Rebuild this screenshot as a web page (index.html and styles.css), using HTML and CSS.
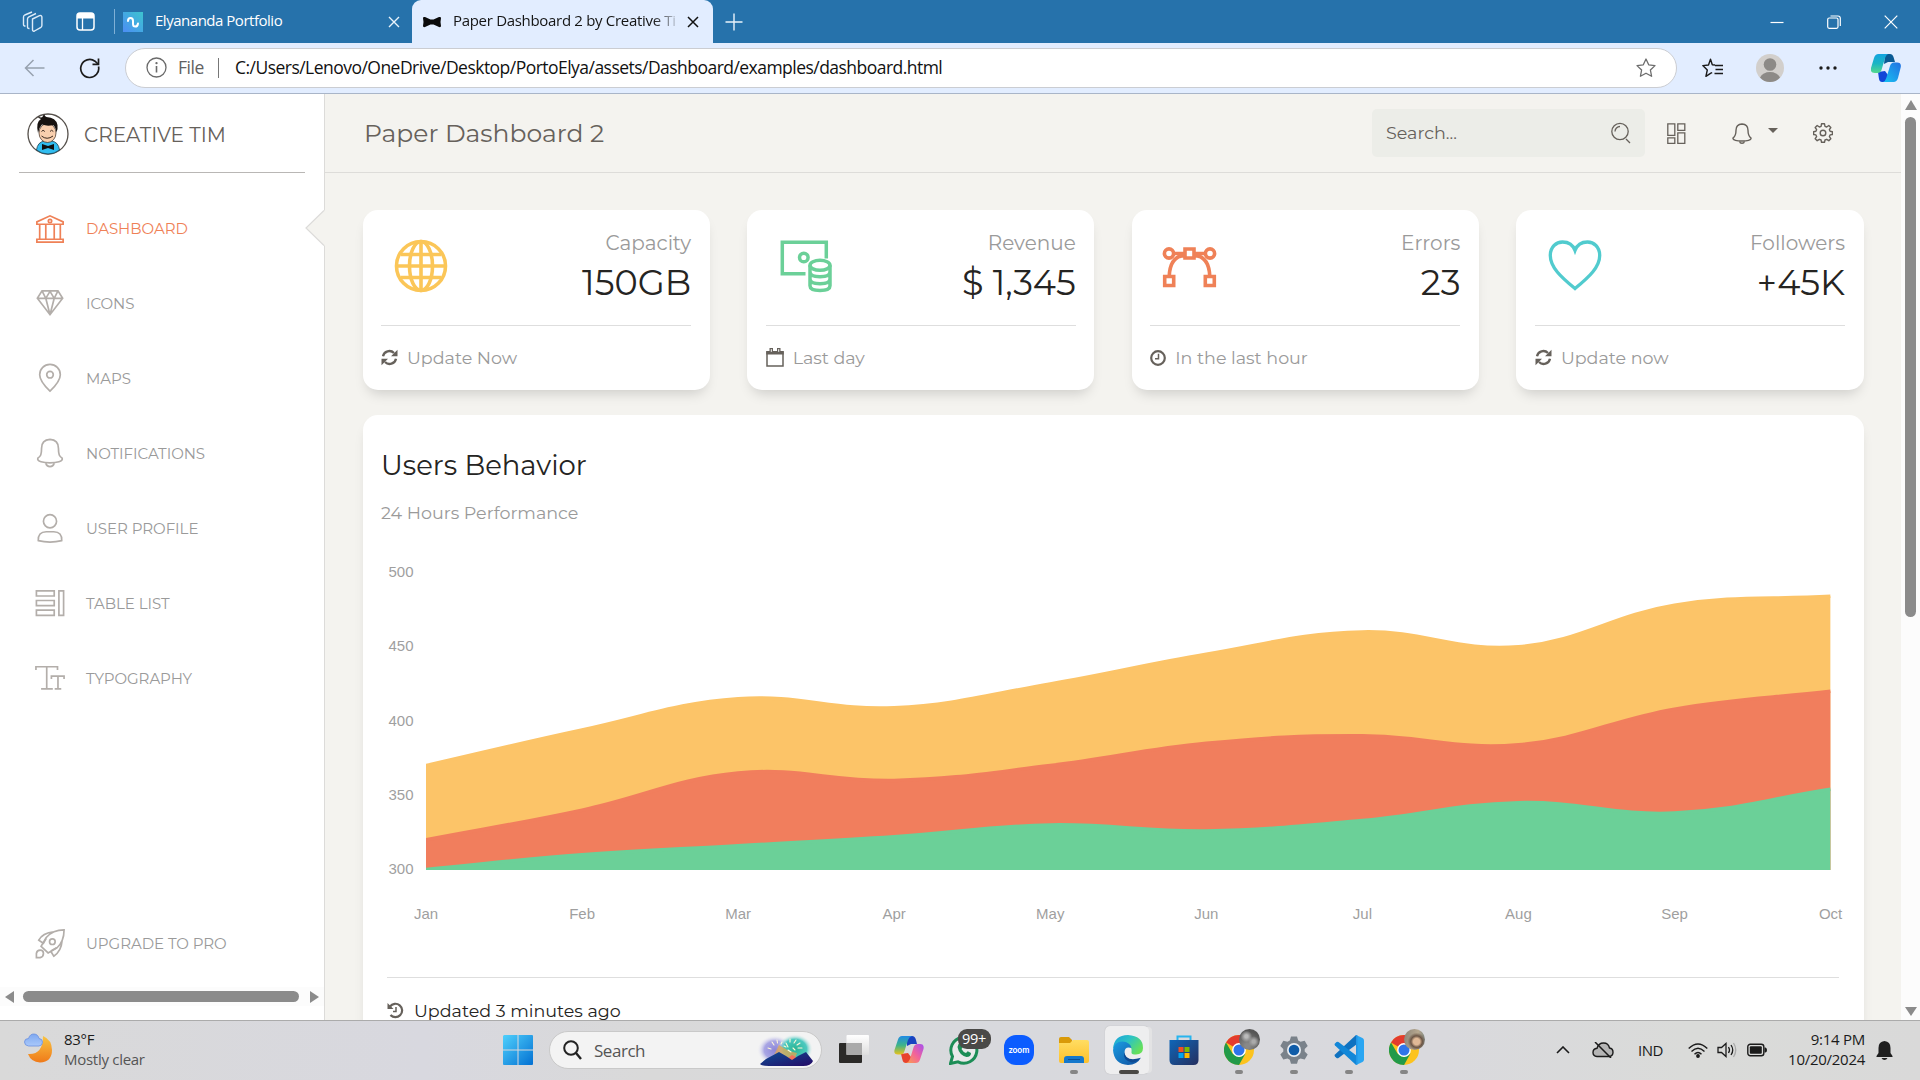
FILE: index.html
```html
<!DOCTYPE html>
<html lang="en">
<head>
<meta charset="utf-8">
<title>Paper Dashboard 2 by Creative Tim</title>
<link rel="stylesheet" href="styles.css">
</head>
<body>
<header class="tabbar">
  <div class="tab-tools">
    <svg class="workspaces" width="24" height="24" viewBox="0 0 24 24" fill="none" stroke="#dcebf8" stroke-width="1.4" stroke-linejoin="round"><path d="M10 9l7-3.3q2-.8 2.4 1.2v8.6q0 1.4-1.4 2.2l-6 3.3q-2 .8-2-1.4z" transform="translate(1.5 0)"/><path d="M8.5 18.5q-2 .3-2-1.7V9q0-1.4 1.4-2.2L15 3.5"/><path d="M4.5 16q-2 .2-2-1.8V7q0-1.3 1.3-2L11 2"/></svg>
    <svg class="vtabs" width="20" height="20" viewBox="0 0 20 20"><rect x="1" y="1" width="17" height="17" rx="3" fill="none" stroke="#fff" stroke-width="1.5"/><path d="M1 4q0-3 3-3h11q3 0 3 3v2.5H1z" fill="#fff"/><path d="M6.5 6v12" stroke="#fff" stroke-width="1.3"/></svg>
    <i class="tab-sep"></i>
  </div>
  <div class="tab">
    <svg class="favicon" width="20" height="20" viewBox="0 0 20 20"><defs><linearGradient id="fv" x1="0" y1="1" x2="1" y2="0"><stop offset="0" stop-color="#4c8df5"/><stop offset="1" stop-color="#3cc4cf"/></linearGradient></defs><rect width="20" height="20" fill="url(#fv)"/><path d="M5 9q0-3 2.5-3T10 9v3q0 2.5 2.3 2.5T15 11.5" fill="none" stroke="#fff" stroke-width="2" stroke-linecap="round"/></svg>
    <span class="tab-title">Elyananda Portfolio</span>
    <svg class="x" width="12" height="12" viewBox="0 0 12 12"><path d="M1 1l10 10M11 1L1 11" stroke="#e9f3fb" stroke-width="1.4"/></svg>
  </div>
  <div class="tab active">
    <svg width="20" height="12" viewBox="0 0 20 12"><path d="M1 2Q1 .5 3 1l5.5 2.5h3L17 1q2-.5 2 1l-.5 4 .5 4q0 1.5-2 1l-5.5-2.5h-3L3 11q-2 .5-2-1l.5-4z" fill="#0b0b0b"/></svg>
    <span class="tab-title">Paper Dashboard 2 by Creative Ti</span>
    <svg class="x" width="12" height="12" viewBox="0 0 12 12"><path d="M1 1l10 10M11 1L1 11" stroke="#111" stroke-width="1.5"/></svg>
  </div>
  <svg class="plus" width="18" height="18" viewBox="0 0 18 18"><path d="M9 .5v17M.5 9h17" stroke="#e9f3fb" stroke-width="1.4"/></svg>
  <div class="winctl">
    <svg width="14" height="14" viewBox="0 0 14 14"><path d="M.5 7.5h13" stroke="#fff" stroke-width="1.2"/></svg>
    <svg width="14" height="14" viewBox="0 0 14 14" fill="none" stroke="#fff" stroke-width="1.2"><rect x=".7" y="3" width="10.3" height="10.3" rx="1.5"/><path d="M3.5 1h7.5q2.3 0 2.3 2.3V11"/></svg>
    <svg width="14" height="14" viewBox="0 0 14 14"><path d="M.7.7l12.6 12.6M13.3.7L.7 13.3" stroke="#fff" stroke-width="1.2"/></svg>
  </div>
</header>

<div class="toolbar">
  <svg class="back" width="21" height="18" viewBox="0 0 21 18" fill="none" stroke="#97a1af" stroke-width="1.5"><path d="M20.5 9H1.5M9.5 1L1.5 9l8 8"/></svg>
  <svg class="reload" width="22" height="22" viewBox="0 0 22 22" fill="none" stroke="#1b1b1b" stroke-width="1.7"><path d="M19.5 9.5A9 9 0 1 1 16 4.2L19 7"/><path d="M19.5 1.5V7.3H13.5"/></svg>
  <div class="omnibox">
    <svg width="21" height="21" viewBox="0 0 21 21" fill="none" stroke="#6a6a6a" stroke-width="1.3"><circle cx="10.5" cy="10.5" r="9.5"/><path d="M10.5 9v6.5" stroke-width="1.6"/><circle cx="10.5" cy="6.2" r=".5" fill="#6a6a6a"/></svg>
    <span class="scheme">File</span>
    <i class="url-sep"></i>
    <span class="url">C:/Users/Lenovo/OneDrive/Desktop/PortoElya/assets/Dashboard/examples/dashboard.html</span>
    <svg class="star" width="20" height="20" viewBox="0 0 20 20" fill="none" stroke="#6d6d6d" stroke-width="1.3" stroke-linejoin="round"><path d="M10 1l2.700 5.800 6.300.8-4.600 4.400 1.200 6.300L10 15.200l-5.600 3.100L5.600 12 1 7.600l6.300-.8z"/></svg>
  </div>
  <svg class="favs" width="22" height="20" viewBox="0 0 22 20" fill="none" stroke="#1b1b1b" stroke-width="1.4" stroke-linejoin="round"><path d="M13 7l-2.700-.2L8.500 1.200 6.500 7l-5.700.6L5.300 12l-1.400 6.300 5-3.200 1.300-.4"/><path d="M13 7.500h8M13.500 11.500H21M12.500 15.500H21"/></svg>
  <svg class="avatar" width="28" height="28" viewBox="0 0 28 28"><circle cx="14" cy="14" r="14" fill="#d2cfcc"/><circle cx="14" cy="10.500" r="6.300" fill="#8d8a87"/><path d="M4 23.500Q7 18 14 18t10 5.500Q20 28 14 28T4 23.500z" fill="#8d8a87"/></svg>
  <svg class="dots" width="18" height="4" viewBox="0 0 18 4" fill="#1b1b1b"><circle cx="2" cy="2" r="1.700"/><circle cx="9" cy="2" r="1.700"/><circle cx="16" cy="2" r="1.700"/></svg>
  <svg class="copilot" width="30" height="28" viewBox="0 0 30 28"><defs><linearGradient id="c1" x1="0" y1="0" x2="0" y2="1"><stop offset="0" stop-color="#12a3e0"/><stop offset=".5" stop-color="#1bb5c4"/><stop offset="1" stop-color="#55d98c"/></linearGradient><linearGradient id="c2" x1="0" y1="1" x2="1" y2="0"><stop offset="0" stop-color="#17c3f2"/><stop offset="1" stop-color="#2370e2"/></linearGradient></defs><path d="M14 0h5q2.500 0 3.500 3l1.500 5h-7l-4 2z" fill="#0a5a94"/><path d="M7 18l7-1 3 4-1 7h-5q-2.500 0-3-3z" fill="#1246d8"/><path d="M7.500 0H17q-2 1-3 4l-3.500 12q-1 3-4 3H4q-5 0-4-5L3 4q1.200-4 4.500-4z" fill="url(#c1)"/><path d="M22.500 28H12q2.500-1 3.300-4L19 12q1-3.500 4-3.500h3q4.500 0 3.800 4.500L27 24q-1.200 4-4.500 4z" fill="url(#c2)"/></svg>
</div>

<div class="page">
  <aside class="sidebar">
    <div class="brand">
      <svg width="42" height="42" viewBox="0 0 42 42"><circle cx="21" cy="21" r="20" fill="#fff" stroke="#55504b" stroke-width="1.3"/><path d="M9.500 37q1-8 8-9h7q7 1 8 9-5 4-11.500 4T9.500 37z" fill="#31bdf0" stroke="#1a3d4d" stroke-width=".8"/><ellipse cx="20.500" cy="20" rx="8.500" ry="9.500" fill="#f9cfae" stroke="#3a2a20" stroke-width=".7"/><path d="M11 20Q8.500 9 14 6q-3-1-3-2.500 3 1.500 4.500.5 0-2 2-2.500 0 1.500 2 2.500 9.500.5 11 8 .5 4-1 7.500-1-6-3.500-7.500-5.500 1.500-11-.5-3 3-4 8.500z" fill="#17120f"/><path d="M14.500 18.500q1.500-2.500 3.300 0M23 18.500q1.500-2.500 3.300 0M14.500 23q5.500 4.500 11.500 0" fill="none" stroke="#3a2a20" stroke-width="1"/><path d="M15 31l6 2 6-2v6l-6-2-6 2z" fill="#101010"/></svg>
      <span>CREATIVE TIM</span>
    </div>
    <nav class="menu">
      <a class="item current"><svg viewBox="0 0 32 32"><path d="M2 12V9.500L16 3l14 6.500V12zM2 28h28v3H2zM5 12v16M11.500 12v16M20.500 12v16M27 12v16"/><circle cx="16" cy="8.500" r="1.800"/></svg><span>DASHBOARD</span></a>
      <a class="item"><svg viewBox="0 0 32 32"><path d="M7.500 3h17l5 8L16 28.500 2.500 11zM2.500 11h27M7.500 3l4 8L16 3.500l4.500 7.500 4-8M11.500 11L16 28.500 20.500 11"/></svg><span>ICONS</span></a>
      <a class="item"><svg viewBox="0 0 32 32"><path d="M16 30Q5 19.500 5 12.500a11 11 0 0 1 22 0Q27 19.500 16 30z"/><circle cx="16" cy="12.500" r="3.500"/></svg><span>MAPS</span></a>
      <a class="item"><svg viewBox="0 0 32 32"><path d="M16 1.500q-9 .5-9 9.500c0 7-1 8.500-4 10.500-1 3.500 6 5 13 5s14-1.500 13-5c-3-2-4-3.500-4-10.500q0-9-9-9.500zM11.500 27q1 3.500 4.500 3.500t4.500-3.500"/></svg><span>NOTIFICATIONS</span></a>
      <a class="item"><svg viewBox="0 0 32 32"><circle cx="16" cy="8.800" r="7"/><path d="M3.500 29.500Q3 20 12 20h8q9 0 8.500 9.500-6 1.500-12.500 1.500t-12.500-1.500z"/></svg><span>USER PROFILE</span></a>
      <a class="item"><svg viewBox="0 0 32 32"><path d="M1.500 3h19v5.500h-19zM1.500 13.300h19v5.500h-19zM1.500 23.600h19v5.500h-19zM25.500 3h5v26.100h-5z"/></svg><span>TABLE LIST</span></a>
      <a class="item"><svg viewBox="0 0 32 32"><path d="M1 7.500V4h23v3.500M12.500 4v23.500M6.500 27.500h12.500M17.500 17v-3H31v3M24.500 14v13.500M21 27.500h7"/></svg><span>TYPOGRAPHY</span></a>
    </nav>
    <a class="item upgrade"><svg viewBox="0 0 32 32"><path d="M31 1Q19 1 12 9L6.500 18.500l7.500 7L23.500 20Q31 13 31 1zM20 3Q8 4 4 12l4.500 3M29 12q-1 12-9 17l-3-5"/><path d="M12 10l-3.500 6M23 20l-6 3.500"/><circle cx="18.500" cy="13.500" r="3"/><path d="M1.500 30.500V26q.5-3.500 4-3.500t3.500 3.500-3.500 4.500z"/></svg><span>UPGRADE TO PRO</span></a>
    <div class="hscroll"><i class="arr left"></i><i class="hthumb"></i><i class="arr right"></i></div>
    <svg class="notch" width="20" height="38" viewBox="0 0 20 38"><path d="M20 1L1.500 19 20 37z" fill="#f4f3ef"/><path d="M19 1.500L1 19l18 17.500" fill="none" stroke="#dcdbd9" stroke-width="1.200"/></svg>
  </aside>

  <main class="main">
    <div class="navbar">
      <h1>Paper Dashboard 2</h1>
      <div class="search"><span>Search...</span>
        <svg width="20" height="22" viewBox="0 0 20 22" fill="none" stroke="#66615b" stroke-width="1.300"><circle cx="9" cy="9.500" r="8.200"/><path d="M15 17l4 4M4 9.500A5 5 0 0 1 9 4.500" /></svg>
      </div>
      <svg class="n-grid" width="19" height="21" viewBox="0 0 19 21" fill="none" stroke="#66615b" stroke-width="1.300"><path d="M.8.800h7v11.500h-7zM10.800.8h7v6.500h-7zM.8 14.800h7v5.500h-7zM10.800 9.800h7v10.500h-7z"/></svg>
      <svg class="n-bell" width="20" height="21" viewBox="0 0 20 21" fill="none" stroke="#66615b" stroke-width="1.400"><path d="M10 1q-6 .3-6 6.300C4 12 3.300 13.500 1 15c-.5 2.300 4 3 9 3s9.500-.7 9-3c-2.300-1.500-3-3-3-7.700Q16 1.300 10 1zM7.500 18.300q.5 2 2.500 2t2.500-2"/></svg>
      <i class="caret"></i>
      <svg class="n-gear" width="20" height="20" viewBox="0 0 20 20" fill="none" stroke="#66615b" stroke-width="1.400" stroke-linejoin="round"><path d="M8.500.8h3l.5 2.500 1.700.7 2.100-1.500 2 2-1.400 2.200.7 1.600 2.300.4v2.800l-2.300.4-.7 1.700 1.400 2.100-2 2-2.100-1.400-1.700.7-.5 2.300h-3l-.4-2.300-1.700-.7-2.200 1.400-2-2 1.400-2.100-.7-1.700-2.300-.4V8.700l2.300-.4.7-1.600L2.200 4.500l2-2L6.400 4l1.700-.7z"/><circle cx="10" cy="10" r="2.800"/></svg>
    </div>

    <div class="content">
      <div class="stats">
        <section class="card">
          <div class="stat"><svg width="56" height="56" viewBox="0 0 56 56" fill="none" stroke="#fbc658" stroke-width="3.600"><circle cx="28" cy="28" r="24.500"/><ellipse cx="28" cy="28" rx="11.500" ry="24.500"/><path d="M28 3.500v49M3.500 28h49M8 16.500h40M8 39.500h40"/></svg>
          <div class="nums"><p>Capacity</p><b>150GB</b></div></div>
          <div class="foot"><svg width="17" height="17" viewBox="0 0 17 17"><path d="M2 7.300A6.500 6.500 0 0 1 13 4M15 9.700A6.500 6.500 0 0 1 4 13" fill="none" stroke="#66615b" stroke-width="2.300"/><path d="M16.500.8v6.500H10zM.5 16.200V9.700H7z" fill="#66615b"/></svg><span>Update Now</span></div>
        </section>
        <section class="card">
          <div class="stat"><svg width="56" height="56" viewBox="0 0 56 56" fill="none" stroke="#6bd098" stroke-width="3.500"><path d="M48.300 20.500V4.300H4.300v31.500H27.500"/><circle cx="25.800" cy="19.500" r="4.300"/><ellipse cx="42" cy="27.300" rx="10" ry="5"/><path d="M32 27.300v20.500q0 4.700 10 4.700t10-4.700V27.300M32 34q0 4.700 10 4.700T52 34M32 41q0 4.700 10 4.700T52 41"/></svg>
          <div class="nums"><p>Revenue</p><b>$ 1,345</b></div></div>
          <div class="foot"><svg width="18" height="19" viewBox="0 0 18 19"><path d="M1 4h16v14H1z" fill="none" stroke="#66615b" stroke-width="1.500"/><path d="M.3 3h17.400v3.500H.3zM3.500 0h3.500v5H3.500zM11 0h3.500v5H11z" fill="#66615b"/><path d="M5.300 1.200v2.600M12.700 1.200v2.600" stroke="#fff" stroke-width="1"/></svg><span>Last day</span></div>
        </section>
        <section class="card">
          <div class="stat"><svg width="56" height="56" viewBox="0 0 56 56" fill="none" stroke="#ef8157" stroke-width="3.600"><circle cx="7" cy="15.500" r="4.600"/><circle cx="48" cy="15.500" r="4.600"/><path d="M23 11h9v9h-9zM2.700 38.500h9v9h-9zM43.300 38.500h9v9h-9zM11.500 15.500H23M32 15.500h11.500M7.200 38.500Q8 18 23 17.500M47.800 38.500Q47 18 32 17.500"/></svg>
          <div class="nums"><p>Errors</p><b>23</b></div></div>
          <div class="foot"><svg width="16" height="16" viewBox="0 0 16 16" fill="none" stroke="#66615b"><circle cx="8" cy="8" r="6.800" stroke-width="2.200"/><path d="M8.500 3.800v5H5" stroke-width="1.500"/></svg><span>In the last hour</span></div>
        </section>
        <section class="card">
          <div class="stat"><svg width="56" height="56" viewBox="0 0 56 56" fill="none" stroke="#51cbce" stroke-width="3.300"><path d="M28 50.500C14 39 3 29 3.300 17 3.500 9 9 4 15.500 4 21 4 26 7 28 12.500 30 7 35 4 40.500 4 47 4 52.500 9 52.700 17 53 29 42 39 28 50.500z"/></svg>
          <div class="nums"><p>Followers</p><b>+45K</b></div></div>
          <div class="foot"><svg width="17" height="17" viewBox="0 0 17 17"><path d="M2 7.300A6.500 6.500 0 0 1 13 4M15 9.700A6.500 6.500 0 0 1 4 13" fill="none" stroke="#66615b" stroke-width="2.300"/><path d="M16.500.8v6.500H10zM.5 16.200V9.700H7z" fill="#66615b"/></svg><span>Update now</span></div>
        </section>
      </div>

      <section class="card behavior">
        <h2>Users Behavior</h2>
        <p class="sub">24 Hours Performance</p>
        <svg id="chart" class="chart" width="1464" height="400" viewBox="0 0 1464 400"></svg>
        <div class="updated"><svg width="17" height="17" viewBox="0 0 17 17"><path d="M3 4.500A6.700 6.700 0 1 1 3.500 13" fill="none" stroke="#66615b" stroke-width="2.200"/><path d="M.5 1v6h6z" fill="#66615b"/><path d="M9 5v4.500H6" fill="none" stroke="#66615b" stroke-width="1.500"/></svg><span>Updated 3 minutes ago</span></div>
      </section>
    </div>
  </main>
  <div class="vscroll"><i class="arr up"></i><i class="vthumb"></i><i class="arr down"></i></div>
</div>

<footer class="taskbar">
  <div class="weather">
    <svg width="30" height="32" viewBox="0 0 30 32"><defs><linearGradient id="mn" x1="0" y1="0" x2="0" y2="1"><stop offset="0" stop-color="#f9c440"/><stop offset="1" stop-color="#ef7a1a"/></linearGradient><linearGradient id="cl" x1="0" y1="0" x2="0" y2="1"><stop offset="0" stop-color="#7ea8f0"/><stop offset="1" stop-color="#a9c8fa"/></linearGradient></defs><path d="M19 3q9 4 9 14 0 12-12 12.500Q7 29 4 21q15 1 15-18z" fill="url(#mn)"/><path d="M4.500 13q-4-.5-4-4t4-3.500Q6 .8 10 1t5 4.500q3.500.3 3.500 3.700T15 13z" fill="url(#cl)" stroke="#6a8fe0" stroke-width=".8"/></svg>
    <div class="wtext"><span>83°F</span><span class="dim">Mostly clear</span></div>
  </div>
  <div class="apps">
    <svg class="app" viewBox="0 0 30 30"><defs><linearGradient id="wn" x1="0" y1="0" x2="1" y2="1"><stop offset="0" stop-color="#4fd0fc"/><stop offset="1" stop-color="#0370d2"/></linearGradient></defs><path d="M1 0h13.500v14.500H0V1zM15.500 0H29q1 0 1 1v13.500H15.500zM0 15.500h14.500V30H1q-1 0-1-1zM15.500 15.500H30V29q0 1-1 1H15.500z" fill="url(#wn)"/></svg>
    <div class="tsearch">
      <svg width="19" height="20" viewBox="0 0 19 20" fill="none" stroke="#222" stroke-width="2"><circle cx="8" cy="8" r="6.800"/><path d="M13 13l5 6" stroke-width="2.400"/></svg>
      <span>Search</span>
      <svg class="fire" width="56" height="34" viewBox="0 0 56 34"><defs><radialGradient id="g1"><stop offset="0" stop-color="#8d86d8"/><stop offset=".6" stop-color="#a9a6e4"/><stop offset="1" stop-color="#f3f3f3" stop-opacity="0"/></radialGradient><radialGradient id="g2"><stop offset="0" stop-color="#2bb594"/><stop offset=".65" stop-color="#4cc9c0"/><stop offset="1" stop-color="#f3f3f3" stop-opacity="0"/></radialGradient><linearGradient id="g3" x1="0" y1="0" x2="1" y2="1"><stop offset="0" stop-color="#0d4f96"/><stop offset="1" stop-color="#260a66"/></linearGradient></defs><ellipse cx="18" cy="17" rx="18" ry="15" fill="url(#g1)"/><ellipse cx="38" cy="16" rx="18" ry="15" fill="url(#g2)"/><path d="M14 28L22 12l10 6 8 2-4 10z" fill="#e2a552" opacity=".75"/><path d="M31 25l4-3 4 2-3 6z" fill="#f4705a"/><path d="M3 31l6-5 13-7 7 4 6 4 6-4 8-4 7 9q-2 5-10 5H12q-8 0-9-2z" fill="url(#g3)"/><path d="M11 15l3 1M15 9l2 3M20 7l.5 3M25 9l-1 2M29 10l2 4M33 6v3M39 7l-2 3M43 10l-3 2M45 15h-4M36 15l2 2M31 17l3 2M27 13l2 1" stroke="#fff8d8" stroke-width="1.100" stroke-linecap="round"/></svg>
    </div>
    <svg class="app" viewBox="0 0 30 30"><defs><linearGradient id="tv" x1="0" y1="0" x2="0" y2="1"><stop offset="0" stop-color="#fff"/><stop offset="1" stop-color="#dedede"/></linearGradient></defs><rect x="0" y="8" width="23" height="20" rx="1" fill="#2b2a28"/><rect x="7.500" y="0" width="22.500" height="20" rx="1" fill="url(#tv)"/><path d="M7.500 8H23v12H7.500z" fill="#aaa"/></svg>
    <svg class="app" viewBox="0 0 30 30"><defs><linearGradient id="p1" x1="0" y1="0" x2="0" y2="1"><stop offset="0" stop-color="#1f8ae6"/><stop offset=".5" stop-color="#3db489"/><stop offset="1" stop-color="#e8c21a"/></linearGradient><linearGradient id="p2" x1="0" y1="1" x2="1" y2="0"><stop offset="0" stop-color="#fba24a"/><stop offset=".5" stop-color="#f2639a"/><stop offset="1" stop-color="#a650ef"/></linearGradient></defs><path d="M13 1h5q3 0 4 4l1 4h-6l-4 2z" fill="#1842c0"/><path d="M7 19l7-1 3 4-1 6h-4q-3 0-3.500-3z" fill="#e8432c"/><path d="M8 1h10q-3 1-4 4l-3.500 11q-1 3.500-4 3.500H4Q-.5 19.500.5 15L4 4.500Q5 1 8 1z" fill="url(#p1)"/><path d="M21.500 28H12q3-1 4-4l3.500-11.500q1-3.500 4-3.500H26q4.500 0 3.500 5L26 24.500q-1 3.500-4.500 3.500z" fill="url(#p2)"/></svg>
    <div class="badged"><svg class="app" viewBox="0 0 30 30"><path d="M1.500 28.500l2-7A13 13 0 1 1 9 26.800z" fill="#e9e9ea" stroke="#1c8d56" stroke-width="3"/><path d="M9.500 9q2-2 3.500.5l1 2.500-1.500 2q1.500 3 4.500 4l1.700-1.700 3.300 1.700q0 4-4.500 4Q10 20 8.500 12z" fill="#1c8d56"/></svg><em>99+</em></div>
    <svg class="app" viewBox="0 0 30 30"><rect width="30" height="30" rx="12" fill="#0b5cff"/><text x="15" y="17.500" text-anchor="middle" class="zoomtxt">zoom</text></svg>
    <div class="run"><svg class="app" viewBox="0 0 30 30"><defs><linearGradient id="fl" x1="0" y1="0" x2="0" y2="1"><stop offset="0" stop-color="#ffdd62"/><stop offset="1" stop-color="#fdc02b"/></linearGradient></defs><path d="M0 4q0-2 2-2h8l3 3v5H0z" fill="#d99a09"/><path d="M0 8h11l3-3h14q2 0 2 2v19q0 2-2 2H2q-2 0-2-2z" fill="url(#fl)"/><path d="M5 28v-4q0-3 3-3h14q3 0 3 3v4z" fill="#1578cc"/><path d="M9 24.500h12" stroke="#0b4f96"/></svg></div>
    <div class="tile run focus"><svg class="app" viewBox="0 0 30 30"><defs><linearGradient id="e1" x1="0" y1="0" x2="1" y2=".6"><stop offset="0" stop-color="#1ba0dc"/><stop offset=".5" stop-color="#2cc3c4"/><stop offset="1" stop-color="#66e05a"/></linearGradient><linearGradient id="e2" x1="0" y1="0" x2="1" y2="1"><stop offset="0" stop-color="#1b9de2"/><stop offset="1" stop-color="#0f4f9f"/></linearGradient></defs><path d="M0 14Q1 0 15 0q15 1 15 13 0 6-7 6.500-4 0-4.500-1.500 1-6-4-9-7-3-14.500 5z" fill="url(#e1)"/><path d="M0 15Q1 6.500 9.500 6.500 17 7 18.500 13q-7-2-7 5 1 7 9 7 4 0 7.500-2.500Q24 30 15 30 1 29 0 15z" fill="url(#e2)"/><path d="M11.500 17Q12 27 27.500 23q-3.500 4-8.500 4.500Q9 25 11.500 17z" fill="#0d4a92"/></svg></div>
    <svg class="app" viewBox="0 0 30 30"><defs><linearGradient id="st" x1="0" y1="0" x2="1" y2="1"><stop offset="0" stop-color="#0f66b8"/><stop offset="1" stop-color="#252f5f"/></linearGradient></defs><path d="M8.500 6V1.500h13V6" fill="none" stroke="#27b4ee" stroke-width="2"/><path d="M.5 5h29v20q0 5-5 5h-19q-5 0-5-5z" fill="url(#st)"/><path d="M9.500 12h5v5h-5z" fill="#f25022"/><path d="M15.500 12h5v5h-5z" fill="#7fba00"/><path d="M9.500 18h5v5h-5z" fill="#00a4ef"/><path d="M15.500 18h5v5h-5z" fill="#ffb900"/></svg>
    <div class="badged run"><svg class="app" viewBox="0 0 30 30"><circle cx="15" cy="15" r="15" fill="#fcc31e"/><path d="M15 15L2 7.500Q6 0 15 0t13 7.500z" fill="#e33b2e"/><path d="M2 7.500A15 15 0 0 0 15 30l6.500-11.500L15 22 8.500 18.500z" fill="#229a49"/><circle cx="15" cy="15" r="6.900" fill="#fff"/><circle cx="15" cy="15" r="5.500" fill="#2f74ea"/></svg><i class="pic grey"></i></div>
    <div class="run"><svg class="app" viewBox="0 0 30 30"><path d="M12 1.500h6l1.200 4 2.300 1.300 4.200-1 3 5.200-3 3v2.500l3 3-3 5-4.200-1-2.300 1.300-1.200 4h-6l-1.200-4-2.300-1.300-4.200 1-3-5 3-3V14l-3-3 3-5.200 4.200 1 2.300-1.300z" fill="#7a828a"/><circle cx="15" cy="15" r="7" fill="#e8eef4"/><circle cx="15" cy="15" r="5.300" fill="#0f5ca8"/></svg></div>
    <div class="run"><svg class="app" viewBox="0 0 30 30"><path d="M22 0v30l6.500-3q1.500-.8 1.500-2.500v-19Q30 3.800 28.500 3z" fill="#2aa6f2"/><path d="M22 0L1 19.500q-1 1 0 2L2.500 23q1 .7 2 0L23 9z" fill="#0f72c0"/><path d="M22 30L1 10.500q-1-1 0-2L2.500 7q1-.7 2 0L23 21z" fill="#1287d8"/><path d="M22 0v30l1.500-.5V.5z" fill="#2196e6"/></svg></div>
    <div class="badged run"><svg class="app" viewBox="0 0 30 30"><circle cx="15" cy="15" r="15" fill="#fcc31e"/><path d="M15 15L2 7.500Q6 0 15 0t13 7.500z" fill="#e33b2e"/><path d="M2 7.500A15 15 0 0 0 15 30l6.500-11.500L15 22 8.500 18.500z" fill="#229a49"/><circle cx="15" cy="15" r="6.900" fill="#fff"/><circle cx="15" cy="15" r="5.500" fill="#2f74ea"/></svg><i class="pic tan"></i></div>
  </div>
  <div class="tray">
    <svg class="t-up" width="14" height="8" viewBox="0 0 14 8" fill="none" stroke="#1b1b1b" stroke-width="1.600"><path d="M1 7l6-6 6 6"/></svg>
    <svg class="t-cloud" width="22" height="16" viewBox="0 0 22 16"><path d="M5 14.500q-4-.3-4-4T5 6.300Q6.500 1 11.500 1t6 5Q21 6.500 21 10.300t-4 4.200z" fill="#b5b5b5" stroke="#1b1b1b" stroke-width="1.400"/><path d="M3 0l16 16" stroke="#1b1b1b" stroke-width="1.500"/></svg>
    <span class="ind">IND</span>
    <svg class="t-wifi" width="20" height="15" viewBox="0 0 20 15" fill="none" stroke="#1b1b1b" stroke-width="1.400"><path d="M.7 5.500Q10-3.500 19.300 5.500M3.500 8.500Q10 2 16.500 8.500M6.500 11.300q3.500-3.500 7 0"/><circle cx="10" cy="13" r="1.200" fill="#1b1b1b"/></svg>
    <svg class="t-vol" width="20" height="16" viewBox="0 0 20 16" fill="none" stroke="#1b1b1b" stroke-width="1.300"><path d="M1 5.500h3.500L9 1.500v13L4.500 10.500H1z"/><path d="M11.500 5q2 3 0 6M14 3q3.500 5 0 10"/><path d="M16.500 1q4.500 7 0 14" stroke="#aaa"/></svg>
    <svg class="t-bat" width="20" height="14" viewBox="0 0 20 14"><rect x=".8" y="1.300" width="16" height="11.400" rx="2.500" fill="none" stroke="#1b1b1b" stroke-width="1.400"/><rect x="2.800" y="3.300" width="12" height="7.400" rx="1" fill="#1b1b1b"/><path d="M17.500 4.500h1q1.500.5 1.500 2.500t-1.500 2.500h-1z" fill="#1b1b1b"/></svg>
    <div class="clock"><span>9:14 PM</span><span>10/20/2024</span></div>
    <svg class="t-bell" width="17" height="19" viewBox="0 0 17 19" fill="#1f1f1f"><path d="M8.500 0Q14.500.5 14.500 7v5l2 3v1H.5v-1l2-3V7Q2.500.5 8.500 0zM5.500 17h6q-1 2-3 2t-3-2z"/></svg>
  </div>
</footer>
<script src="chart.js"></script>
</body>
</html>
```
FILE: styles.css
```css
* { box-sizing: border-box; margin: 0; padding: 0; }
body { width: 1920px; height: 1080px; overflow: hidden; display: flex; flex-direction: column; font-family: "Segoe UI", "Open Sans", sans-serif; background: #fff; }
svg { flex: none; display: block; }
span, p, b, h1, h2, em { white-space: nowrap; font-weight: 400; font-style: normal; }

/* Browser tab strip */
.tabbar { height: 43px; flex: none; background: #2672ab; display: flex; align-items: center; }
.tab-tools { width: 123px; display: flex; align-items: center; padding-left: 21px; }
.vtabs { margin-left: 31px; }
.tab-sep { width: 1px; height: 25px; background: #7fb0d6; margin-left: 18px; }
.tab { width: 289px; height: 43px; display: flex; align-items: center; }
.tab .x { margin-left: auto; margin-right: 12px; }
.tab.active { width: 301px; background: #e2edff; border-radius: 9px 9px 0 0; padding-left: 10px; }
.tab.active .x { margin-right: 14px; }
.tab-title { color: #fff; font-size: 15px; margin-left: 12px; padding-bottom: 3px; letter-spacing: -.48px; }
.tab.active .tab-title { color: #151515; width: 226px; margin-left: 11px; letter-spacing: -.31px; -webkit-mask-image: linear-gradient(90deg, #000 200px, rgba(0,0,0,.15) 224px); mask-image: linear-gradient(90deg, #000 200px, rgba(0,0,0,.15) 224px); }
.plus { margin-left: 12px; }
.winctl { margin-left: auto; display: flex; gap: 43px; padding-right: 22px; }

/* Address bar */
.toolbar { height: 51px; flex: none; background: #e2edff; border-bottom: 1px solid #a9b5c8; display: flex; align-items: center; padding-left: 24px; }
.reload { margin-left: 34px; }
.omnibox { width: 1552px; height: 40px; margin-left: 24px; margin-top: -1px; border: 1px solid #cbcdd2; border-radius: 20px; background: #fff; display: flex; align-items: center; padding: 0 20px; }
.scheme { font-size: 17.5px; color: #616161; margin-left: 11px; width: 27px; letter-spacing: -.43px; padding-bottom: 1px; }
.url-sep { width: 1px; height: 20px; background: #777; margin: 0 16px 0 13px; }
.url { font-size: 17.5px; color: #111; letter-spacing: -.53px; padding-bottom: 1px; }
.star { margin-left: auto; }
.favs { margin-left: 25px; }
.avatar { margin-left: 32px; }
.dots { margin-left: 35px; }
.copilot { margin-left: 34px; }

/* Dashboard sidebar */
.page { height: 926px; flex: none; display: flex; overflow: hidden; font-family: Montserrat, Inter, sans-serif; }
.sidebar { position: relative; width: 325px; flex: none; background: #fff; border-right: 1px solid #dcdbd9; display: flex; flex-direction: column; }
.brand { height: 79px; margin: 0 19px; border-bottom: 1px solid #b9b7b5; display: flex; align-items: center; padding: 2px 0 0 8px; }
.brand span { margin-left: 15px; padding-top: 2px; font-size: 20px; color: #66615b; }
.menu { padding-top: 18px; }
.item { display: flex; align-items: center; height: 75px; padding-left: 35px; color: #9a9a9a; font-size: 15px; }
.menu .item { padding-bottom: 1px; }
.item svg { width: 30px; height: 30px; fill: none; stroke: #b3aeaa; stroke-width: 1.8; }
.item span { margin-left: 21px; letter-spacing: -.04px; }
.item.current { color: #ef8157; }
.item.current svg { stroke: #ef8157; }
.upgrade { margin-top: auto; margin-bottom: 6px; }
.hscroll { height: 19px; margin-bottom: 14px; background: #fcfcfc; display: flex; align-items: center; padding: 0 5px; }
.arr { width: 0; height: 0; border: 6px solid transparent; flex: none; }
.arr.left { border-right: 9px solid #8b8b8b; border-left: 0; }
.arr.right { border-left: 9px solid #8b8b8b; border-right: 0; margin-left: auto; }
.arr.up { border-bottom: 10px solid #8b8b8b; border-top: 0; }
.arr.down { border-top: 9px solid #8b8b8b; border-bottom: 0; margin-top: auto; }
.hthumb { width: 276px; height: 11px; border-radius: 6px; background: #8b8b8b; margin-left: 9px; }
.notch { position: absolute; right: -1px; top: 115px; }

/* Dashboard content */
.main { width: 1576px; flex: none; background: #f4f3ef; overflow: hidden; }
.navbar { height: 79px; border-bottom: 1px solid #dddcd9; display: flex; align-items: center; padding-left: 39px; }
.navbar h1 { font-size: 25px; color: #66615b; width: 1008px; }
.search { width: 273px; height: 48px; border-radius: 5px; background: #ecede8; display: flex; align-items: center; justify-content: space-between; padding: 0 14px; font-size: 17.5px; color: #66615b; }
.search span { margin-top: -1px; }
.n-grid { margin-left: 22px; }
.n-bell { margin-left: 46px; }
.caret { border: 5px solid transparent; border-top-color: #66615b; border-bottom: 0; margin: -5px 0 0 16px; }
.n-gear { margin-left: 35px; }
.content { padding: 37px 37.5px 0; }
.stats { display: grid; grid-template-columns: repeat(4, 1fr); column-gap: 37.5px; }
.card { background: #fff; border-radius: 15px; box-shadow: 0 8px 13px -5px rgba(0,0,0,.17); }
.stats .card { height: 180px; padding: 0 18.5px; }
.stat { height: 116px; border-bottom: 1px solid #dedede; display: flex; justify-content: space-between; padding: 28px 0 0 12px; }
.nums { text-align: right; display: flex; flex-direction: column; align-items: flex-end; margin-top: -8px; }
.nums p { font-size: 20px; line-height: 26px; color: #9a9a9a; }
.nums b { font-size: 35px; line-height: 54px; color: #252422; }
.foot { height: 63px; display: flex; align-items: center; gap: 9px; font-size: 17.5px; color: #9a9a9a; }
.behavior { margin-top: 25px; height: 620px; padding: 0 18.5px; }
.behavior h2 { font-size: 27.5px; color: #252422; padding-top: 32px; line-height: 36px; }
.sub { font-size: 17.5px; color: #9a9a9a; line-height: 24px; margin-top: 18px; }
.chart { margin-top: 15px; }
.chart text { font: 15px Arial, "Liberation Sans", sans-serif; fill: #9f9f9f; }
.updated { margin: 37px 6px 0; border-top: 1px solid #dedede; height: 66px; display: flex; align-items: center; gap: 10px; font-size: 17.5px; color: #252422; }
.vscroll { width: 19px; background: #fcfcfc; display: flex; flex-direction: column; align-items: center; padding: 6px 0 4px; }
.vthumb { width: 11px; height: 500px; border-radius: 6px; background: #8b8b8b; margin-top: 7px; }

/* Desktop taskbar */
.taskbar { height: 60px; flex: none; border-top: 1px solid #ababab; background: linear-gradient(90deg, #d9d9d9 0, #d8d8df 22%, #d9d9d9 34%, #d8d9dd 50%, #d9d9dd 75%, #dadbd9 88%, #d9d9d9 100%); display: flex; align-items: center; color: #1b1b1b; }
.weather { width: 503px; display: flex; align-items: center; padding-left: 24px; gap: 10px; font-size: 15px; letter-spacing: -.28px; padding-bottom: 3px; }
.wtext { display: flex; flex-direction: column; line-height: 20px; align-items: flex-start; }
.dim { color: #555; }
.apps { display: flex; align-items: center; width: 980px; gap: 25px; padding-bottom: 1px; }
.app { width: 30px; height: 30px; }
.tsearch { width: 273px; height: 38px; margin: 0 -8px 0 -9px; border-radius: 19px; background: #f3f3f3; border: 1px solid #c9c9c9; display: flex; align-items: center; padding-left: 13px; font-size: 17px; color: #555; }
.tsearch span { margin-left: 12px; width: 52px; letter-spacing: -.47px; }
.fire { margin-left: auto; margin-right: 8px; }
.badged { position: relative; }
.badged em { position: absolute; left: 9px; top: -6px; width: 33px; height: 20px; border-radius: 9px; background: #4a4947; color: #fff; font-size: 14.5px; line-height: 20px; padding-left: 4px; letter-spacing: -.3px; }
.zoomtxt { font: 700 8.5px Lato, sans-serif; fill: #fff; }
.run { position: relative; }
.run::after { content: ""; position: absolute; left: 50%; bottom: -9px; width: 8px; height: 4px; margin-left: -4px; border-radius: 2px; background: #858585; }
.run.focus::after { width: 20px; margin-left: -8px; bottom: 0; background: #4a4845; }
.tile { width: 44px; height: 48px; margin: 0 -5px 0 -9px; padding-left: 2px; background: #eeeeef; border-radius: 5px; box-shadow: 4px 0 0 -1px #e3e3e4, 0 0 1px #aaa; display: flex; align-items: center; justify-content: center; }
.pic { position: absolute; left: 15px; top: -6px; width: 21px; height: 21px; border-radius: 50%; }
.grey { background: radial-gradient(circle at 35% 35%, #bbb 8%, transparent 30%), radial-gradient(circle at 70% 60%, #aaa 8%, transparent 28%), radial-gradient(circle at 40% 80%, #888 10%, #555 70%); }
.tan { background: radial-gradient(circle at 60% 60%, #e0b996 18%, #6b5545 32%, transparent 50%), linear-gradient(100deg, #8b8478, #b7a88f 60%, #6d7a78); }
.tray { margin-left: auto; display: flex; align-items: center; font-size: 15px; width: 364px; padding-bottom: 1px; }
.t-cloud { margin-left: 22px; }
.ind { margin-left: 24px; width: 25px; letter-spacing: -.46px; }
.t-wifi { margin-left: 25px; }
.t-vol { margin-left: 9px; }
.t-bat { margin-left: 10px; }
.clock { display: flex; flex-direction: column; align-items: flex-end; line-height: 20px; width: 98px; letter-spacing: -.27px; padding-bottom: 3px; }
.t-bell { margin-left: 11px; }
```
FILE: chart.js
```js
const months = ['Jan', 'Feb', 'Mar', 'Apr', 'May', 'Jun', 'Jul', 'Aug', 'Sep', 'Oct'];
const series = [
  { color: '#fcc468', values: [370, 394, 415, 409, 425, 445, 460, 450, 478, 484] },
  { color: '#f17e5d', values: [320, 340, 365, 360, 370, 385, 390, 384, 408, 420] },
  { color: '#6bd098', values: [300, 310, 316, 322, 330, 326, 333, 345, 338, 354] }
];
const left = 45, right = 1449.6, base = 329.5, perUnit = 1.485, tension = 0.4;
const step = (right - left) / 9;

// Smooth line through the values, with control points scaled by neighbour distance
function curve(values) {
  const pts = values.map((v, i) => [left + i * step, base - (v - 300) * perUnit]);
  const ctl = pts.map((p, i) => {
    const a = pts[i - 1] || p, b = pts[i + 1] || p;
    const d1 = Math.hypot(p[0] - a[0], p[1] - a[1]), d2 = Math.hypot(b[0] - p[0], b[1] - p[1]);
    const f1 = tension * d1 / (d1 + d2), f2 = tension * d2 / (d1 + d2);
    return [[p[0] - f1 * (b[0] - a[0]), p[1] - f1 * (b[1] - a[1])], [p[0] + f2 * (b[0] - a[0]), p[1] + f2 * (b[1] - a[1])]];
  });
  let d = 'M' + pts[0];
  for (let i = 1; i < pts.length; i++) d += 'C' + ctl[i - 1][1] + ' ' + ctl[i][0] + ' ' + pts[i];
  return d;
}

let out = `<clipPath id="plot"><rect x="${left}" y="0" width="${right - left}" height="${base + 0.5}"/></clipPath><g clip-path="url(#plot)">`;
for (const s of series) {
  const d = curve(s.values);
  out += `<path d="${d}V${base + 1}H${left}Z" fill="${s.color}"/><path d="${d}" fill="none" stroke="${s.color}" stroke-width="3.5"/>`;
}
out += '</g>';
for (let v = 300; v <= 500; v += 50) out += `<text x="32.5" y="${base - (v - 300) * perUnit + 4.5}" text-anchor="end">${v}</text>`;
months.forEach((m, i) => { out += `<text x="${left + i * step}" y="379" text-anchor="middle">${m}</text>`; });
document.getElementById('chart').innerHTML = out;
```
